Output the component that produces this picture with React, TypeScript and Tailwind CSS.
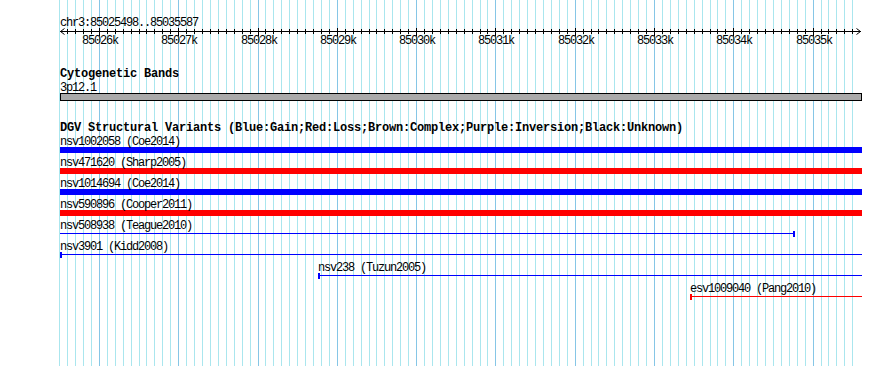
const START = 85025498;
const END = 85035587;
const SCALE = 0.0793;
const LEFT = 60;
const TRACK_W = 802;

// screen x (page pixels) for a base position
const toX = (bp: number) => Math.floor(59.6 + (bp - START) * SCALE);

const gridStops: number[] = [];
for (let bp = 85025500; bp <= END; bp += 100) gridStops.push(bp);

type Variant = {
  id: string;
  study: string;
  color: "blue" | "red";
  glyph: "bar" | "line";
  start?: number;
  end?: number;
};

const variants: Variant[] = [
  { id: "nsv1002058", study: "Coe2014", color: "blue", glyph: "bar" },
  { id: "nsv471620", study: "Sharp2005", color: "red", glyph: "bar" },
  { id: "nsv1014694", study: "Coe2014", color: "blue", glyph: "bar" },
  { id: "nsv590896", study: "Cooper2011", color: "red", glyph: "bar" },
  { id: "nsv508938", study: "Teague2010", color: "blue", glyph: "line", end: 85034772 },
  { id: "nsv3901", study: "Kidd2008", color: "blue", glyph: "line", start: 85025498 },
  { id: "nsv238", study: "Tuzun2005", color: "blue", glyph: "line", start: 85028769 },
  { id: "esv1009040", study: "Pang2010", color: "red", glyph: "line", start: 85033448 },
];

const fill = {
  blue: "bg-[#0000ff]",
  red: "bg-[#ff0000]",
};

function GridLines() {
  return (
    <svg
      className="pointer-events-none absolute left-0 top-0"
      width={890}
      height={366}
      shapeRendering="crispEdges"
    >
      {gridStops.map((bp) => {
        const x = toX(bp) + 0.5;
        const major = bp % 1000 === 0;
        return (
          <line
            key={bp}
            x1={x}
            x2={x}
            y1={0}
            y2={366}
            stroke={major ? "#86c6e6" : "#aae6ee"}
            strokeWidth={1}
          />
        );
      })}
    </svg>
  );
}

function Ruler() {
  const majors = gridStops.filter((bp) => bp % 1000 === 0);
  return (
    <div>
      <div className="h-[10px] whitespace-pre text-[12px] leading-[10px] tracking-[-1.2px]">
        chr3:85025498..85035587
      </div>
      <svg width={TRACK_W} height={8} className="block" shapeRendering="crispEdges">
        <line x1={0} x2={801} y1={3.5} y2={3.5} stroke="#000" />
        {gridStops.map((bp) => {
          const x = toX(bp) - LEFT + 0.5;
          const major = bp % 1000 === 0;
          return (
            <line
              key={bp}
              x1={x}
              x2={x}
              y1={major ? 0 : 1}
              y2={major ? 8 : 6}
              stroke="#000"
            />
          );
        })}
        <polyline
          points="4.5,0.5 0.5,3.5 4.5,6.5"
          fill="none"
          stroke="#000"
          shapeRendering="auto"
        />
        <polyline
          points="796.5,0.5 800.5,3.5 796.5,6.5"
          fill="none"
          stroke="#000"
          shapeRendering="auto"
        />
      </svg>
      <div className="relative h-[10px]">
        {majors.map((bp) => (
          <span
            key={bp}
            className="absolute top-0 -translate-x-1/2 whitespace-pre text-[12px] leading-[10px] tracking-[-1.2px]"
            style={{ left: toX(bp) - LEFT + 1 }}
          >
            {`${bp / 1000}k`}
          </span>
        ))}
      </div>
    </div>
  );
}

function VariantRow({ v }: { v: Variant }) {
  const startX = v.start === undefined ? 0 : Math.max(0, toX(v.start) - LEFT);
  const endX = v.end === undefined ? TRACK_W : toX(v.end) - LEFT;
  const bg = fill[v.color];

  return (
    <div className="h-[21px]">
      <div
        className="h-[11px] whitespace-pre text-[12px] leading-[12px] tracking-[-1.2px]"
        style={{ marginLeft: startX }}
      >
        {`${v.id} (${v.study})`}
      </div>
      {v.glyph === "bar" ? (
        <div className={`h-[6px] ${bg}`} style={{ marginLeft: startX, width: endX - startX }} />
      ) : (
        <div className="flex h-[6px]" style={{ marginLeft: startX, width: endX - startX }}>
          {v.start !== undefined && <div className={`h-full w-[2px] ${bg}`} />}
          <div className={`mt-[2px] h-px flex-1 ${bg}`} />
          {v.end !== undefined && <div className={`h-full w-[2px] ${bg}`} />}
        </div>
      )}
    </div>
  );
}

export default function App() {
  return (
    <div className="relative h-[366px] w-[890px] overflow-hidden bg-white font-['Liberation_Mono',monospace] text-black">
      <GridLines />

      <div className="relative ml-[60px] w-[802px] pt-[18px]">
        <Ruler />

        <div className="mt-[22px] h-[12px] whitespace-pre text-[12px] font-bold leading-[12px] tracking-[-0.2px]">
          Cytogenetic Bands
        </div>
        <div className="mt-[3px] h-[10px] whitespace-pre text-[12px] leading-[10px] tracking-[-1.2px]">
          3p12.1
        </div>
        <div className="h-[8px] border border-black bg-[#aaaaaa]" />

        <div className="mt-[21px] h-[12px] whitespace-pre text-[12px] font-bold leading-[12px] tracking-[-0.2px]">
          DGV Structural Variants (Blue:Gain;Red:Loss;Brown:Complex;Purple:Inversion;Black:Unknown)
        </div>

        <div className="mt-[2px]">
          {variants.map((v) => (
            <VariantRow key={v.id} v={v} />
          ))}
        </div>
      </div>
    </div>
  );
}
